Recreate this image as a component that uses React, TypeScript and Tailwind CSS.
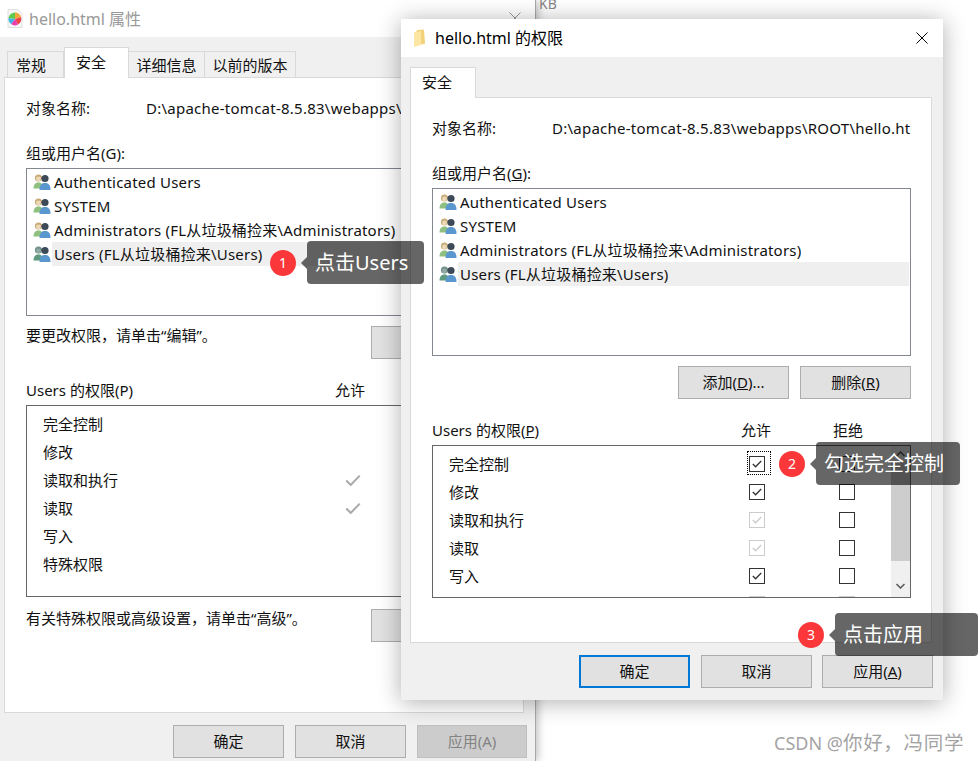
import type { ReactNode } from "react";

/* ---------- 图标 ---------- */
function GroupIcon({ dim }: { dim?: boolean }) {
  return (
    <svg width="18" height="17" viewBox="0 0 18 17" className="shrink-0">
      <circle cx="5.5" cy="4" r="3.6" fill={dim ? "#6f8f88" : "#c9ab78"} />
      <circle cx="5.5" cy="5" r="2.4" fill={dim ? "#93aaa4" : "#ecd9b8"} />
      <path d="M0.5 14.5 C0.5 10 3 8.5 5.5 8.5 C8 8.5 10 10 10 14.5 Z" fill={dim ? "#5f9a7e" : "#8fc07f"} />
      <circle cx="12" cy="4.5" r="3.6" fill="#3c4a58" />
      <path d="M6.5 16 C6.5 10.5 9 9 12 9 C15 9 17.5 10.5 17.5 16 Z" fill="#5b97cf" />
    </svg>
  );
}

function FolderIcon() {
  return (
    <svg width="13" height="19" viewBox="0 0 13 19" className="shrink-0">
      <path d="M1 4 L4 2 L4 1 L11 0.5 L12 15 L1 16 Z" fill="#f3d27a" />
      <path d="M1 4 L8 2 L8 16 L1 18 Z" fill="#fbe6a3" />
    </svg>
  );
}

function FileIcon() {
  return (
    <svg width="16" height="19" viewBox="0 0 16 19" className="shrink-0">
      <path d="M1 0.5 H11 L15 4.5 V18.5 H1 Z" fill="#f7f7f7" stroke="#e0e0e0" />
      <path d="M8 10 L8 3.5 A6.5 6.5 0 0 1 14 8 Z" fill="#f0a83c" />
      <path d="M8 10 L14 8 A6.5 6.5 0 0 1 11 15.5 Z" fill="#ef4444" />
      <path d="M8 10 L11 15.5 A6.5 6.5 0 0 1 4 15 Z" fill="#e93fb0" />
      <path d="M8 10 L4 15 A6.5 6.5 0 0 1 1.5 9 Z" fill="#3fb4e8" />
      <path d="M8 10 L1.5 9 A6.5 6.5 0 0 1 8 3.5 Z" fill="#62c94f" />
    </svg>
  );
}

function CloseIcon({ size, color }: { size: number; color: string }) {
  return (
    <svg width={size} height={size} viewBox="0 0 12 12">
      <path d="M0.5 0.5 L11.5 11.5 M11.5 0.5 L0.5 11.5" stroke={color} strokeWidth="1" fill="none" />
    </svg>
  );
}

function Check({ color, w = 10 }: { color: string; w?: number }) {
  return (
    <svg width={w} height={w * 0.8} viewBox="0 0 10 8">
      <path d="M0.8 4 L3.6 6.8 L9.2 1" stroke={color} strokeWidth="1.3" fill="none" />
    </svg>
  );
}

/* ---------- 控件 ---------- */
function Btn({ children, variant = "normal" }: { children?: ReactNode; variant?: "normal" | "primary" | "disabled" }) {
  const look =
    variant === "primary"
      ? "w-[111px] border-2 border-[#0078d7] bg-[#e1e1e1]"
      : variant === "disabled"
        ? "w-[110px] border border-[#bfbfbf] bg-[#cccccc] text-[#838383]"
        : "w-[111px] border border-[#adadad] bg-[#e1e1e1]";
  return <div className={`flex h-[33px] shrink-0 items-center justify-center text-[15px] ${look}`}>{children}</div>;
}

type Box = "on" | "off" | "dim" | "none";

function CheckBox({ state, focus }: { state: Box; focus?: boolean }) {
  if (state === "none") return <div className="h-[16px] w-[16px]" />;
  return (
    <div className="relative h-[16px] w-[16px]">
      <div className={`flex h-[16px] w-[16px] items-center justify-center border ${state === "dim" ? "border-[#cccccc]" : "border-[#333333]"} bg-white`}>
        {state === "on" && <Check color="#333333" />}
        {state === "dim" && <Check color="#cccccc" />}
      </div>
      {focus && <div className="absolute -top-[5px] -left-[2px] h-[24px] w-[24px] border border-dotted border-black" />}
    </div>
  );
}

const users = [
  "Authenticated Users",
  "SYSTEM",
  "Administrators (FL从垃圾桶捡来\\Administrators)",
  "Users (FL从垃圾桶捡来\\Users)",
];

function UserList({ height }: { height: string }) {
  return (
    <div className={`border border-[#828790] bg-white pt-[1px] pr-[1px] pl-[6px] ${height}`}>
      {users.map((u, i) => (
        <div key={u} className="flex h-[24px] items-center">
          <GroupIcon dim={i === 3} />
          <span className={`ml-[1px] flex h-[24px] flex-1 items-center pl-[2px] tracking-[0.2px] whitespace-nowrap ${i === 3 ? "bg-[#efefef]" : ""}`}>{u}</span>
        </div>
      ))}
    </div>
  );
}

function Callout({ n, text, className }: { n: number; text: string; className: string }) {
  return (
    <div className={`absolute flex items-center ${className}`}>
      <div className="flex h-[26px] w-[26px] items-center justify-center rounded-full bg-[#fb3739] text-[14px] leading-none text-white">{n}</div>
      <div className="ml-[5px] h-0 w-0 border-y-[6px] border-r-[6px] border-y-transparent border-r-black/60" />
      <div className="flex h-[43px] flex-1 items-center rounded-[4px] bg-black/60 pl-[8px] text-[20px] whitespace-nowrap text-white">{text}</div>
    </div>
  );
}

/* ---------- 后面的属性窗口 ---------- */
function PropertiesWindow() {
  const rows: [string, boolean][] = [
    ["完全控制", false],
    ["修改", false],
    ["读取和执行", true],
    ["读取", true],
    ["写入", false],
    ["特殊权限", false],
  ];
  return (
    <div className="absolute top-0 left-0 flex h-[761px] w-[536px] flex-col overflow-hidden border-r border-[#a8a8a8] bg-[#f0f0f0] shadow-[2px_0_8px_rgba(0,0,0,0.25)]">
      <div className="flex h-[37px] shrink-0 items-center justify-between bg-white pr-[14px] pl-[7px]">
        <div className="flex items-center gap-[6px] text-[16px] text-[#999999]">
          <FileIcon />
          <span>hello.html 属性</span>
        </div>
        <div className="-mt-[1px]"><CloseIcon size={12} color="#999999" /></div>
      </div>
      <div className="flex h-[40px] shrink-0 items-end pl-[7px]">
        <div className="flex h-[26px] w-[57px] items-center border border-b-0 border-[#d9d9d9] pt-[2px] pl-[8px] text-[15px]">常规</div>
        <div className="relative z-10 -mb-px flex h-[31px] w-[65px] items-start border border-b-0 border-[#d9d9d9] bg-white pt-[3px] pl-[11px] text-[15px]">安全</div>
        <div className="flex h-[26px] w-[76px] items-center justify-center border border-b-0 border-l-0 border-[#d9d9d9] pt-[2px] text-[15px]">详细信息</div>
        <div className="flex h-[26px] w-[91px] items-center justify-center border border-b-0 border-l-0 border-[#d9d9d9] pt-[2px] text-[15px]">以前的版本</div>
      </div>
      <div className="ml-[4px] h-[636px] w-[520px] shrink-0 border border-[#d9d9d9] bg-white px-[21px] pt-[19px]">
        <div className="flex h-[22px] items-center whitespace-nowrap">
          <span className="w-[120px] shrink-0">对象名称:</span>
          <span className="tracking-[0.25px]">D:\apache-tomcat-8.5.83\webapps\ROOT\hello.html</span>
        </div>
        <div className="mt-[23px] flex h-[22px] items-center">组或用户名(G):</div>
        <div className="mt-[4px]"><UserList height="h-[148px]" /></div>
        <div className="mt-[10px] flex items-start justify-between pr-[20px]">
          <span className="-mt-[2px] leading-[22px]">要更改权限，请单击“编辑”。</span>
          <Btn />
        </div>
        <div className="mt-[20px] flex h-[22px] items-center">
          <span className="w-[309px]">Users 的权限(P)</span>
          <span>允许</span>
        </div>
        <div className="mt-[4px] h-[192px] border border-[#666666] pt-[4px]">
          {rows.map(([name, checked]) => (
            <div key={name} className="flex h-[28px] items-center pl-[16px]">
              <span className="w-[302px]">{name}</span>
              {checked && <Check color="#aaaaaa" w={16} />}
            </div>
          ))}
        </div>
        <div className="mt-[12px] flex items-start justify-between pr-[20px]">
          <span className="-mt-[2px] leading-[22px]">有关特殊权限或高级设置，请单击“高级”。</span>
          <Btn />
        </div>
      </div>
      <div className="mt-[12px] flex gap-[11px] pl-[173px]">
        <Btn>确定</Btn>
        <Btn>取消</Btn>
        <Btn variant="disabled">应用(A)</Btn>
      </div>
    </div>
  );
}

/* ---------- 前面的权限窗口 ---------- */
function PermissionWindow() {
  const rows: [string, Box, Box][] = [
    ["完全控制", "on", "off"],
    ["修改", "on", "off"],
    ["读取和执行", "dim", "off"],
    ["读取", "dim", "off"],
    ["写入", "on", "off"],
    ["", "dim", "dim"],
  ];
  return (
    <div className="absolute top-[19px] left-[401px] flex h-[681px] w-[542px] flex-col bg-[#f0f0f0] shadow-[0_2px_22px_rgba(0,0,0,0.32)]">
      <div className="flex h-[38px] shrink-0 items-center justify-between bg-white pr-[15px] pl-[12px]">
        <div className="flex items-center gap-[9px] text-[16px] text-black">
          <FolderIcon />
          <span>hello.html 的权限</span>
        </div>
        <CloseIcon size={12} color="#000000" />
      </div>
      <div className="flex h-[40px] shrink-0 items-end pl-[9px]">
        <div className="relative z-10 -mb-px flex h-[31px] w-[66px] items-start border border-b-0 border-[#d9d9d9] bg-white pt-[3px] pl-[11px] text-[15px]">安全</div>
      </div>
      <div className="ml-[9px] h-[546px] w-[522px] shrink-0 border border-[#d9d9d9] bg-white px-[21px] pt-[19px]">
        <div className="w-[479px] overflow-hidden">
          <div className="flex h-[22px] items-center whitespace-nowrap">
            <span className="w-[120px] shrink-0">对象名称:</span>
            <span className="tracking-[0.25px]">D:\apache-tomcat-8.5.83\webapps\ROOT\hello.html</span>
          </div>
        </div>
        <div className="mt-[23px] flex h-[22px] items-center">组或用户名(<u>G</u>):</div>
        <div className="mt-[4px] w-[479px]"><UserList height="h-[168px]" /></div>
        <div className="mt-[10px] flex w-[479px] justify-end gap-[11px]">
          <Btn>添加(<u>D</u>)...</Btn>
          <Btn>删除(<u>R</u>)</Btn>
        </div>
        <div className="mt-[20px] flex h-[22px] w-[479px] items-center">
          <span className="w-[309px]">Users 的权限(<u>P</u>)</span>
          <span className="w-[92px]">允许</span>
          <span>拒绝</span>
        </div>
        <div className="mt-[4px] flex h-[153px] w-[479px] overflow-hidden border border-[#666666]">
          <div className="flex-1 pt-[4px]">
            {rows.map(([name, allow, deny], i) => (
              <div key={i} className="flex h-[28px] items-center pl-[16px]">
                <span className="w-[300px]">{name}</span>
                <div className="w-[90px]"><CheckBox state={allow} focus={i === 0} /></div>
                <CheckBox state={deny} />
              </div>
            ))}
          </div>
          <div className="flex w-[19px] shrink-0 flex-col bg-[#f0f0f0]">
            <div className="flex h-[15px] items-center justify-center">
              <svg width="9" height="6" viewBox="0 0 9 6"><path d="M0.5 5 L4.5 1 L8.5 5" stroke="#555555" strokeWidth="1.5" fill="none" /></svg>
            </div>
            <div className="h-[100px] bg-[#cdcdcd]" />
            <div className="flex flex-1 items-end justify-center pb-[8px]">
              <svg width="9" height="6" viewBox="0 0 9 6"><path d="M0.5 1 L4.5 5 L8.5 1" stroke="#555555" strokeWidth="1.5" fill="none" /></svg>
            </div>
          </div>
        </div>
      </div>
      <div className="mt-[12px] flex pl-[178px]">
        <Btn variant="primary">确定</Btn>
        <div className="ml-[11px]"><Btn>取消</Btn></div>
        <div className="ml-[10px]"><Btn>应用(<u>A</u>)</Btn></div>
      </div>
    </div>
  );
}

export default function App() {
  return (
    <div className="relative h-[761px] w-[979px] overflow-hidden bg-white font-['Noto_Sans','Noto_Sans_CJK_SC',sans-serif] text-[15px] text-[#111111]">
      <div className="absolute -top-[7px] left-[539px] text-[14px] text-[#888888]">KB</div>
      <PropertiesWindow />
      <PermissionWindow />
      <Callout n={1} text="点击Users" className="top-[241px] left-[270px] w-[154px]" />
      <Callout n={2} text="勾选完全控制" className="top-[442px] left-[779px] w-[181px]" />
      <Callout n={3} text="点击应用" className="top-[613px] left-[798px] w-[180px]" />
      <div className="absolute top-[728px] left-[774px] text-[18px] whitespace-nowrap text-[#a4a4a4]">
        CSDN @<span className="text-[19.5px] tracking-[0.7px]">你好，冯同学</span>
      </div>
    </div>
  );
}
